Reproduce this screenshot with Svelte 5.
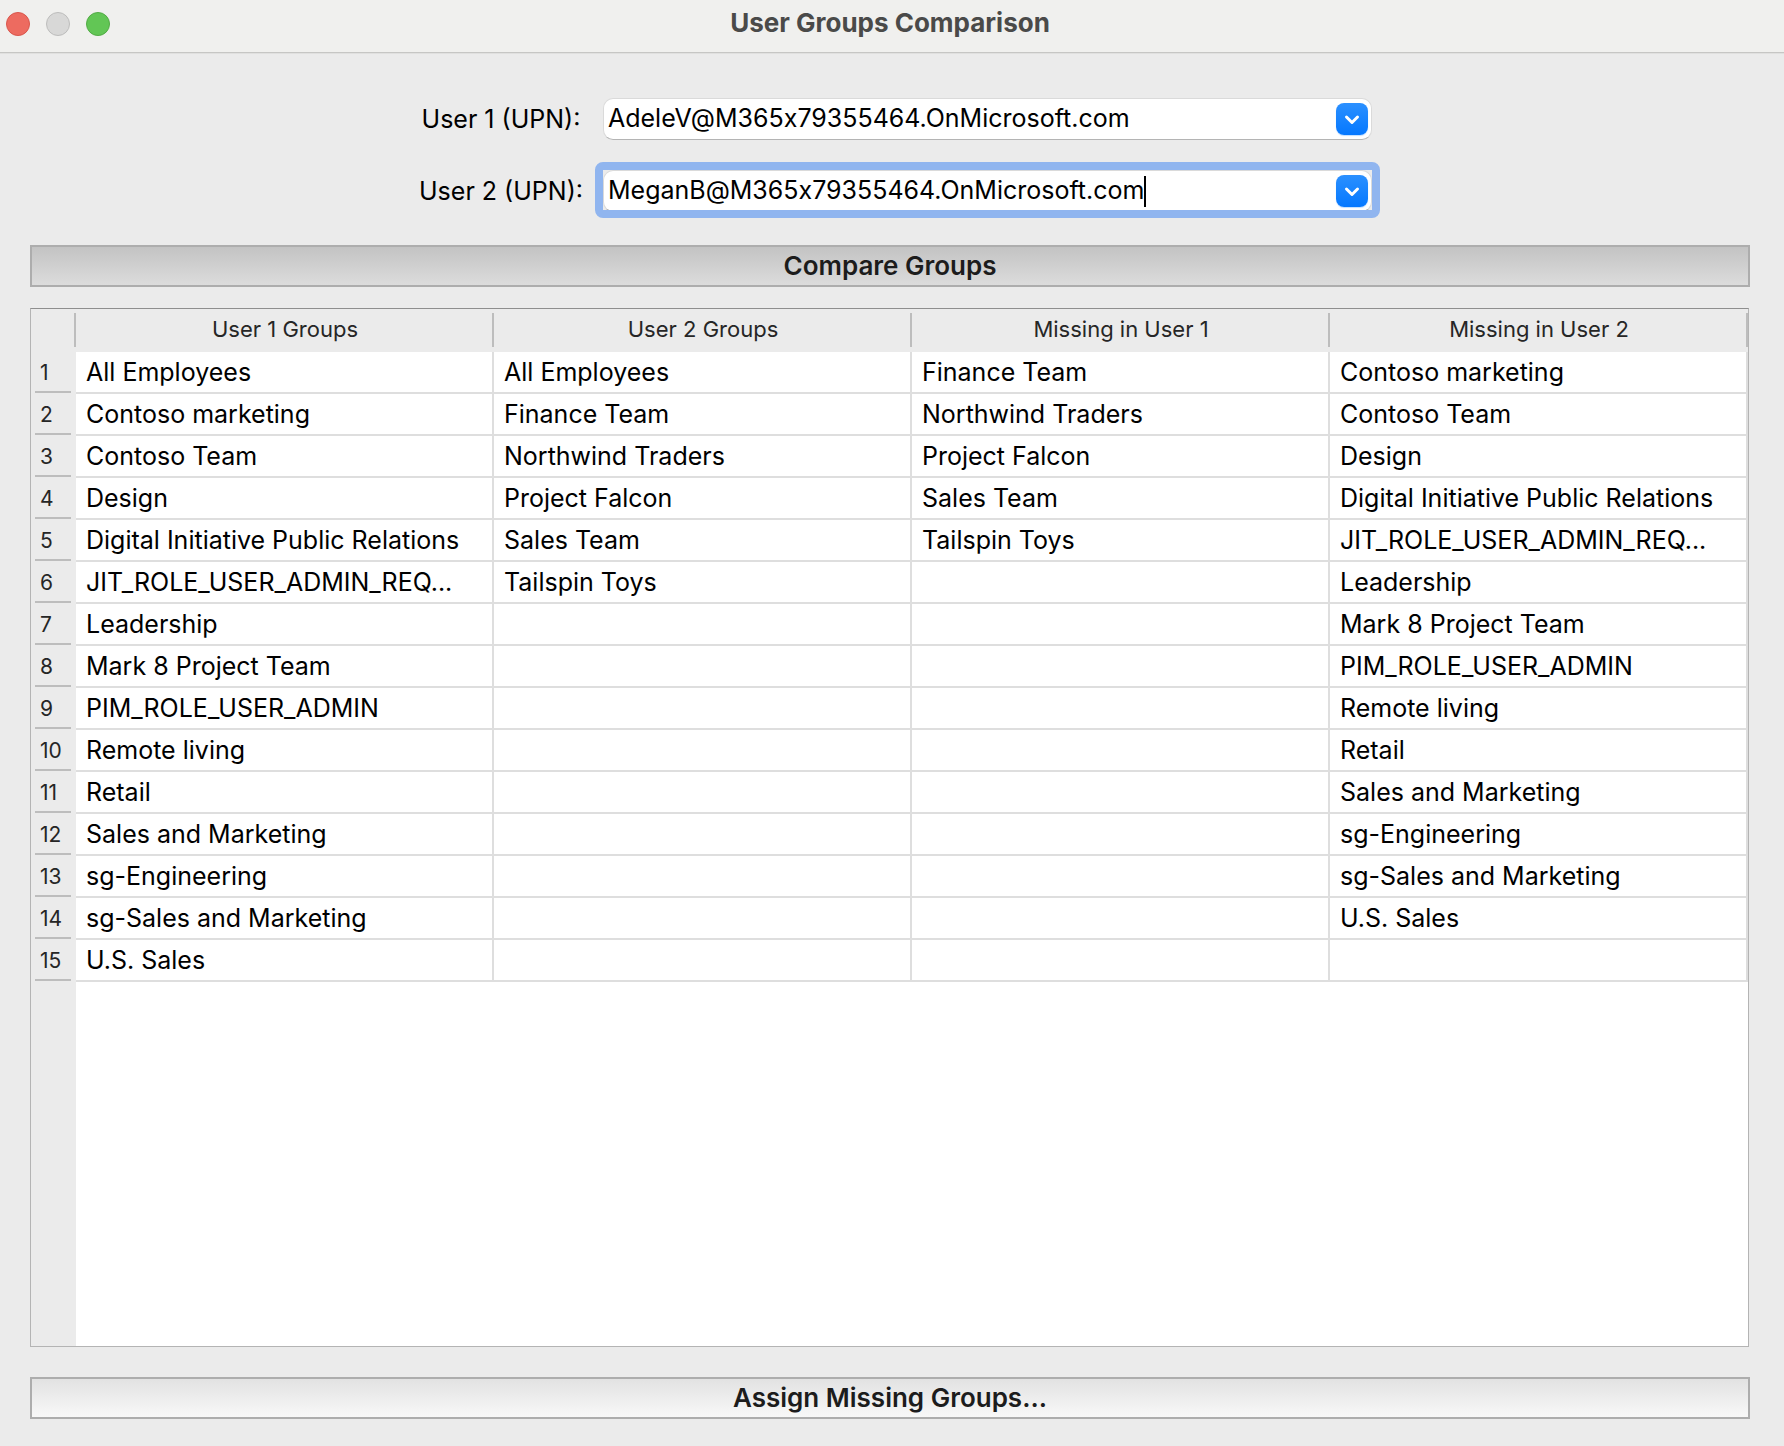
<script>
  const users = $state([
    { id: 'user1', label: 'User 1 (UPN):', value: 'AdeleV@M365x79355464.OnMicrosoft.com', active: false },
    { id: 'user2', label: 'User 2 (UPN):', value: 'MeganB@M365x79355464.OnMicrosoft.com', active: true }
  ]);

  const user1Groups = [
    'All Employees', 'Contoso marketing', 'Contoso Team', 'Design',
    'Digital Initiative Public Relations', 'JIT_ROLE_USER_ADMIN_REQ...',
    'Leadership', 'Mark 8 Project Team', 'PIM_ROLE_USER_ADMIN', 'Remote living',
    'Retail', 'Sales and Marketing', 'sg-Engineering', 'sg-Sales and Marketing', 'U.S. Sales'
  ];
  const user2Groups = [
    'All Employees', 'Finance Team', 'Northwind Traders', 'Project Falcon', 'Sales Team', 'Tailspin Toys'
  ];

  const columns = [
    { title: 'User 1 Groups', items: user1Groups },
    { title: 'User 2 Groups', items: user2Groups },
    { title: 'Missing in User 1', items: user2Groups.filter((g) => !user1Groups.includes(g)) },
    { title: 'Missing in User 2', items: user1Groups.filter((g) => !user2Groups.includes(g)) }
  ];
  const rowCount = Math.max(...columns.map((c) => c.items.length));
</script>

<div class="window">
  <header class="titlebar">
    <div class="lights">
      <button class="light close" aria-label="Close"></button>
      <button class="light minimize" aria-label="Minimize" disabled></button>
      <button class="light zoom" aria-label="Zoom"></button>
    </div>
    <h1>User Groups Comparison</h1>
  </header>

  <main>
    <div class="form">
      {#each users as user (user.id)}
        <label for={user.id}>{user.label}</label>
        <div class="combo" class:active={user.active}>
          <input id={user.id} type="text" bind:value={user.value} spellcheck="false" />
          {#if user.active}<span class="caret"></span>{/if}
          <button class="drop" aria-label="Show users">
            <svg viewBox="0 0 32 32" aria-hidden="true"><path d="M10.5 14 L16 19.5 L21.5 14" /></svg>
          </button>
        </div>
      {/each}
    </div>

    <button class="action compare">Compare Groups</button>

    <div class="grid">
      <table>
        <thead>
          <tr>
            <td class="corner"></td>
            {#each columns as column}
              <th scope="col">{column.title}</th>
            {/each}
          </tr>
        </thead>
        <tbody>
          {#each { length: rowCount } as _, i}
            <tr>
              <th scope="row">{i + 1}</th>
              {#each columns as column}
                <td>{column.items[i] ?? ''}</td>
              {/each}
            </tr>
          {/each}
        </tbody>
      </table>
    </div>

    <button class="action assign">Assign Missing Groups...</button>
  </main>
</div>

<style>
  :global(body) {
    margin: 0;
    background: #ebebeb;
  }

  .window {
    display: flex;
    flex-direction: column;
    min-height: 100vh;
    font-family: Inter, 'Liberation Sans', sans-serif;
    font-size: 25px;
    color: #000;
    background: #ebebeb;
  }

  button,
  input {
    font: inherit;
    color: inherit;
    margin: 0;
    padding: 0;
    border: 0;
  }

  .titlebar {
    display: grid;
    grid-template-columns: 1fr auto 1fr;
    align-items: center;
    height: 52px;
    padding: 0 10px 0 6px;
    box-sizing: border-box;
    background: #f0f0ee;
    box-shadow: 0 1px #c6c6c4, 0 2px #e0e0df;
  }

  .lights {
    display: flex;
    gap: 16px;
    padding-bottom: 4px;
  }

  .light {
    width: 24px;
    height: 24px;
    border: 1px solid;
    border-radius: 50%;
    box-sizing: border-box;
  }

  .close {
    background: #ed6b60;
    border-color: #d9564c;
  }

  .minimize {
    background: #d8d8d7;
    border-color: #bdbdbc;
  }

  .zoom {
    background: #62c655;
    border-color: #52ab45;
  }

  h1 {
    margin: 0;
    padding-bottom: 6px;
    font-size: 26px;
    line-height: 30px;
    font-weight: 700;
    color: #4a4a49;
  }

  main {
    display: flex;
    flex-direction: column;
    flex: 1;
    padding: 46px 34px 27px 30px;
  }

  .form {
    display: grid;
    grid-template-columns: auto minmax(0, 769px);
    justify-content: center;
    align-items: center;
    column-gap: 20px;
    row-gap: 30px;
    padding-left: 11px;
    margin-bottom: 33px;
  }

  label {
    text-align: center;
    white-space: nowrap;
  }

  .combo {
    position: relative;
    display: flex;
    align-items: center;
    height: 42px;
    padding: 0 3px 0 4px;
    box-sizing: border-box;
    background: #fff;
    border: 1px solid #dadada;
    border-bottom-color: #b4b4b4;
    border-radius: 10px;
  }

  .combo input {
    flex: 1;
    min-width: 0;
    height: 36px;
    padding-bottom: 2px;
    box-sizing: border-box;
    background: none;
    outline: none;
    font-feature-settings: 'calt' 0;
  }

  .combo.active::before {
    content: '';
    position: absolute;
    inset: -9px -9px -7px;
    border: 8px solid #90b5ef;
    border-radius: 8px;
    pointer-events: none;
  }

  .active input {
    flex: 0 1 auto;
    field-sizing: content;
  }

  .caret {
    width: 2px;
    height: 31px;
    background: #000;
  }

  .drop {
    display: flex;
    flex: none;
    width: 32px;
    height: 32px;
    margin-left: auto;
    border-radius: 8px;
    background: linear-gradient(#2b90ff, #0578ff);
    box-shadow: 0 1px 1px #0578ff40;
  }

  .drop svg {
    width: 32px;
    height: 32px;
    fill: none;
    stroke: #fff;
    stroke-width: 3;
    stroke-linecap: round;
    stroke-linejoin: round;
  }

  .action {
    height: 42px;
    border: 2px solid #adadad;
    font-size: 26px;
    font-weight: 600;
    line-height: 38px;
    color: #1c1c1c;
  }

  .compare {
    background: linear-gradient(#c3c3c3, #dcdcdc);
  }

  .assign {
    background: linear-gradient(#e2e2e2, #f8f8f8);
  }

  .grid {
    flex: 1;
    margin: 21px 1px 30px 0;
    border: 1px solid #b4b4b4;
    border-top-color: #8e8e8e;
    background: linear-gradient(90deg, #ebebeb 45px, #fff 45px);
  }

  table {
    width: 100%;
    table-layout: fixed;
    border-collapse: separate;
    border-spacing: 0;
  }

  th,
  td {
    height: 42px;
    padding: 0;
    box-sizing: border-box;
    white-space: nowrap;
    overflow: hidden;
  }

  thead th,
  .corner {
    height: 43px;
    padding-bottom: 3px;
    font-size: 22px;
    line-height: 28px;
    font-weight: 400;
    color: #262626;
    background: linear-gradient(#bdbdbd, #bdbdbd) right 4px / 2px 34px no-repeat #ebebeb;
  }

  .corner {
    width: 45px;
  }

  tbody th {
    padding-left: 9px;
    text-align: left;
    font-size: 21px;
    line-height: 28px;
    font-weight: 400;
    color: #262626;
    background: linear-gradient(#bdbdbd, #bdbdbd) 4px 39px / 36px 2px no-repeat #ebebeb;
  }

  tbody td {
    padding-left: 10px;
    line-height: 30px;
    border-right: 2px solid #dedede;
    border-bottom: 2px solid #dedede;
  }
</style>
